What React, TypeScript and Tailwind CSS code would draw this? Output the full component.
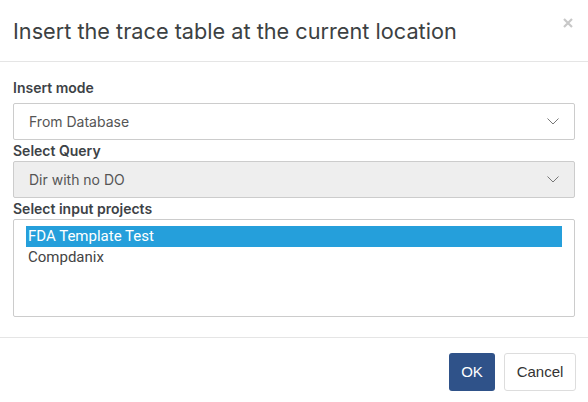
import React from "react";

function Chevron() {
  return (
    <svg width="12" height="7" viewBox="0 0 12 7" className="shrink-0">
      <path d="M0.5 0.5 L6 6 L11.5 0.5" fill="none" stroke="#777" strokeWidth="1" />
    </svg>
  );
}

export default function App() {
  return (
    <div className="w-[588px] h-[402px] bg-white flex flex-col text-[#333]" style={{ fontFamily: "Inter, 'Noto Sans', sans-serif" }}>
      <div className="h-[62px] flex items-start justify-between pl-[13px] pr-[15px] pt-[16px] border-b border-[#e5e5e5]">
        <h1 className="text-[21.7px] leading-[30px] text-[#3c4142] font-normal">Insert the trace table at the current location</h1>
        <svg width="10" height="10" viewBox="0 0 10 10" className="mt-[2px]">
          <path d="M1 1 L9 9 M9 1 L1 9" stroke="#c8c8c8" strokeWidth="2.2" />
        </svg>
      </div>
      <div className="flex-1 flex flex-col px-[13px] pt-[16px]">
        <label className="text-[14px] leading-[20px] font-semibold text-[#3d4246] mb-[5px]">Insert mode</label>
        <div className="h-[37px] border border-[#cccccc] rounded-[2px] bg-white flex items-center justify-between pl-[15px] pr-[15px]">
          <span className="text-[14px] text-[#555]">From Database</span>
          <Chevron />
        </div>
        <label className="text-[14px] leading-[20px] font-semibold text-[#3d4246] mt-[1px]">Select Query</label>
        <div className="h-[37px] border border-[#cccccc] rounded-[2px] bg-[#eeeeee] flex items-center justify-between pl-[15px] pr-[15px]">
          <span className="text-[14px] text-[#555]">Dir with no DO</span>
          <Chevron />
        </div>
        <label className="text-[14px] leading-[20px] font-semibold text-[#3d4246] mt-[1px]">Select input projects</label>
        <div className="h-[98px] border border-[#cccccc] rounded-[2px] bg-white pl-[12px] pr-[12px] pt-[6px]" style={{ fontFamily: "Roboto, 'Liberation Sans', sans-serif" }}>
          <div className="h-[21px] bg-[#259fdb] text-white text-[15px] leading-[21px] pl-[2px]">FDA Template Test</div>
          <div className="h-[20px] text-[#444] text-[15px] leading-[20px] pl-[2px]">Compdanix</div>
        </div>
        <div className="h-[20px]" />
      </div>
      <div className="h-[65px] border-t border-[#e5e5e5] flex items-start justify-end gap-[9px] pr-[12px] pt-[15px]" style={{ fontFamily: "'Liberation Sans', Arial, sans-serif" }}>
        <button className="w-[46px] h-[38px] rounded-[3px] bg-[#2f5289] text-white text-[15px]">OK</button>
        <button className="w-[72px] h-[38px] rounded-[3px] bg-white border border-[#dddddd] text-[#333] text-[15px]">Cancel</button>
      </div>
    </div>
  );
}
